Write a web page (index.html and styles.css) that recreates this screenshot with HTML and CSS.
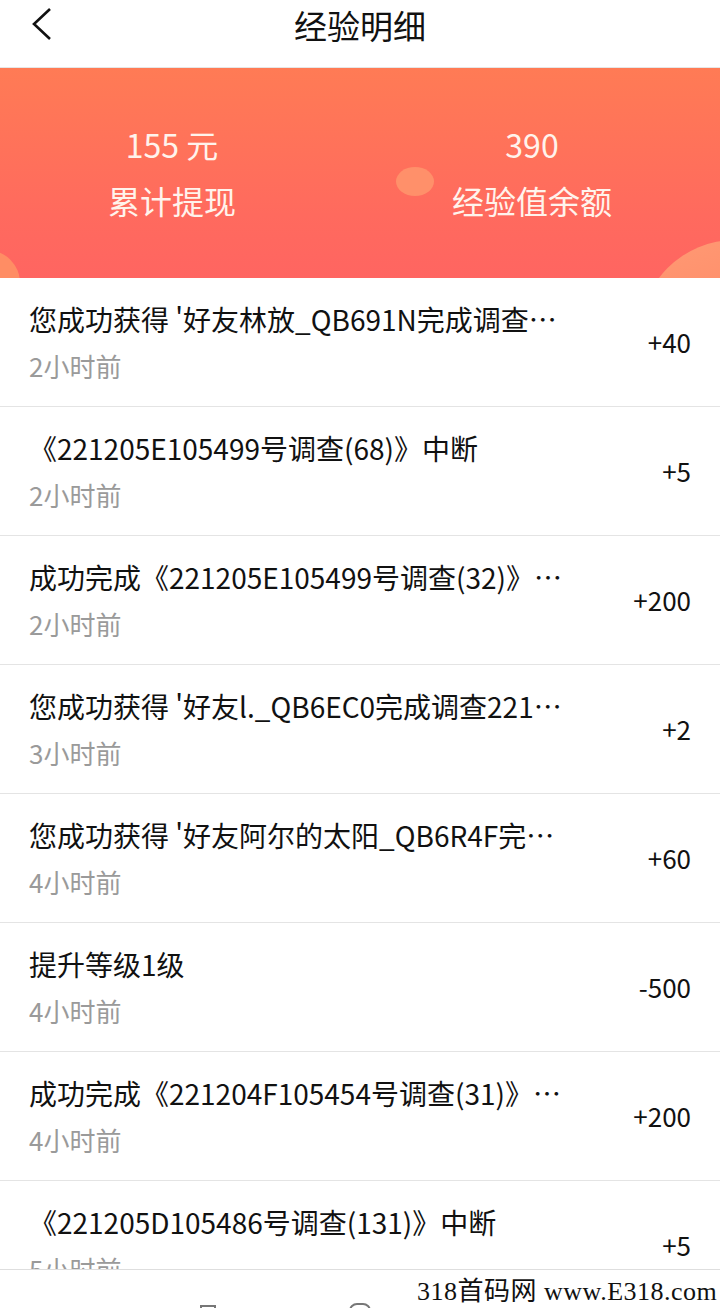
FILE: index.html
```html
<!DOCTYPE html>
<html lang="zh-CN">

<head>
  <meta charset="UTF-8">
  <meta name="viewport" content="width=device-width, initial-scale=1.0">
  <title>经验明细</title>
  <link rel="stylesheet" href="styles.css">
</head>

<body>
  <div class="page">
    <!-- nav -->
    <header class="nav">
      <a class="back" href="#">
        <svg width="24" height="36" viewBox="0 0 24 36">
          <path d="M19 2 L3 17 L19 32" fill="none" stroke="#111" stroke-width="2.6" />
        </svg>
      </a>
      <h1>经验明细</h1>
    </header>

    <!-- banner -->
    <section class="banner">
      <span class="dot dot-mid"></span>
      <span class="dot dot-left"></span>
      <span class="dot dot-right"></span>
      <div class="stat">
        <div class="num">155 元</div>
        <div class="label">累计提现</div>
      </div>
      <div class="stat">
        <div class="num">390</div>
        <div class="label">经验值余额</div>
      </div>
    </section>

    <!-- records -->
    <ul class="records">
      <li class="record">
        <div class="info">
          <p class="title">您成功获得 '好友林放_QB691N完成调查221205E105499号调查'奖励</p>
          <p class="time">2小时前</p>
        </div>
        <span class="amount">+40</span>
      </li>
      <li class="record">
        <div class="info">
          <p class="title">《221205E105499号调查(68)》中断</p>
          <p class="time">2小时前</p>
        </div>
        <span class="amount">+5</span>
      </li>
      <li class="record">
        <div class="info">
          <p class="title">成功完成《221205E105499号调查(32)》调查</p>
          <p class="time">2小时前</p>
        </div>
        <span class="amount">+200</span>
      </li>
      <li class="record">
        <div class="info">
          <p class="title">您成功获得 '好友l._QB6EC0完成调查221205E105499号调查'奖励</p>
          <p class="time">3小时前</p>
        </div>
        <span class="amount">+2</span>
      </li>
      <li class="record">
        <div class="info">
          <p class="title">您成功获得 '好友阿尔的太阳_QB6R4F完成调查'奖励</p>
          <p class="time">4小时前</p>
        </div>
        <span class="amount">+60</span>
      </li>
      <li class="record">
        <div class="info">
          <p class="title">提升等级1级</p>
          <p class="time">4小时前</p>
        </div>
        <span class="amount">-500</span>
      </li>
      <li class="record">
        <div class="info">
          <p class="title">成功完成《221204F105454号调查(31)》调查</p>
          <p class="time">4小时前</p>
        </div>
        <span class="amount">+200</span>
      </li>
      <li class="record">
        <div class="info">
          <p class="title">《221205D105486号调查(131)》中断</p>
          <p class="time">5小时前</p>
        </div>
        <span class="amount">+5</span>
      </li>
    </ul>

    <!-- tabbar -->
    <footer class="tabbar">
      <span class="tab-icon tab-square"></span>
      <span class="tab-icon tab-round"></span>
    </footer>

    <div class="watermark">318首码网 www.E318.com</div>
  </div>
</body>

</html>
```

FILE: styles.css
```css
/* reset start */
* {
  box-sizing: border-box;
}

html,
body {
  margin: 0;
  padding: 0;
}

body {
  font-family: "Noto Sans CJK SC", "Noto Sans", sans-serif;
  color: #111;
  background: #fff;
}

ul,
p,
h1 {
  margin: 0;
  padding: 0;
}

ul {
  list-style: none;
}

/* reset end */

.page {
  position: relative;
  width: 720px;
  height: 1308px;
  display: flex;
  flex-direction: column;
  overflow: hidden;
}

/* nav start */
.nav {
  height: 68px;
  flex: none;
  display: flex;
  justify-content: center;
  position: relative;
  background: #fff;
  border-bottom: 1px solid #e6e6e6;
}

.nav h1 {
  font-size: 33px;
  font-weight: 400;
  line-height: 48px;
  color: #111;
  margin-top: 1px;
}

.nav .back {
  position: absolute;
  left: 31px;
  top: 7px;
  display: block;
  width: 24px;
  height: 36px;
}

/* nav end */

/* banner start */
.banner {
  position: relative;
  height: 210px;
  flex: none;
  display: grid;
  grid-template-columns: 344px 1fr;
  background: linear-gradient(180deg, #ff7b55 0%, #ff6a5e 70%, #ff6561 100%);
  overflow: hidden;
  color: #fff;
}

.banner .stat {
  position: relative;
  display: flex;
  flex-direction: column;
  align-items: center;
  gap: 16px;
  padding-top: 56px;
}

.banner .num,
.banner .label {
  font-size: 32px;
  line-height: 40px;
  color: #fff3ec;
}

.banner .dot {
  position: absolute;
  border-radius: 50%;
}

.banner .dot-mid {
  left: 396px;
  top: 99px;
  width: 38px;
  height: 29px;
  background: #ff906a;
}

.banner .dot-left {
  left: -46px;
  top: 182px;
  width: 66px;
  height: 66px;
  background: #ff8d64;
}

.banner .dot-right {
  left: 640px;
  top: 172px;
  width: 190px;
  height: 190px;
  background: linear-gradient(160deg, #ff9a74 0%, #ff8765 60%);
}

/* banner end */

/* records start */
.records {
  flex: 1;
  overflow: hidden;
}

.record {
  height: 129px;
  display: flex;
  align-items: center;
  padding: 0 29px;
  border-bottom: 1px solid #e4e4e4;
}

.record .info {
  flex: none;
  width: 534px;
  padding-bottom: 2px;
}

.record .title {
  font-size: 28px;
  line-height: 40px;
  white-space: nowrap;
  overflow: hidden;
  text-overflow: ellipsis;
  color: #111;
}

.record .time {
  margin-top: 9px;
  font-size: 26px;
  line-height: 36px;
  color: #9a9a9a;
}

.record .amount {
  margin-left: auto;
  margin-bottom: 2px;
  font-size: 26px;
  color: #111;
}

/* records end */

/* tabbar start */
.tabbar {
  position: relative;
  height: 39px;
  flex: none;
  border-top: 1px solid #dedede;
  background: #fff;
}

.tab-icon {
  position: absolute;
  border: 2px solid #777;
}

.tab-square {
  left: 200px;
  top: 35px;
  width: 16px;
  height: 16px;
}

.tab-round {
  left: 349px;
  top: 33px;
  width: 22px;
  height: 22px;
  border-radius: 8px;
}

/* tabbar end */

.watermark {
  position: absolute;
  left: 417px;
  top: 1275px;
  font-family: "Liberation Serif", "Noto Sans CJK SC", serif;
  font-size: 26px;
  line-height: 34px;
  letter-spacing: 0.5px;
  white-space: nowrap;
  color: #111;
}
```
